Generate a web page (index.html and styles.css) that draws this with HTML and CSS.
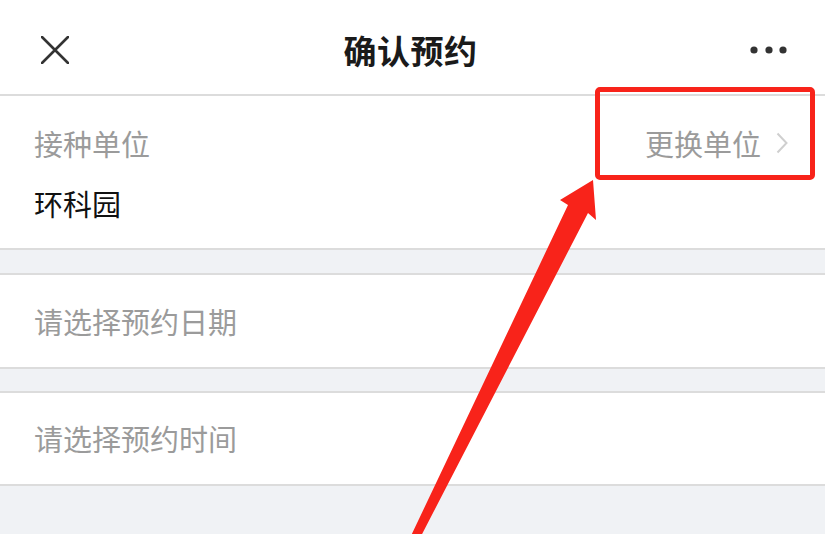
FILE: index.html
```html
<!DOCTYPE html>
<html lang="zh-CN">
<head>
    <meta charset="UTF-8">
    <meta name="viewport" content="width=device-width, initial-scale=1.0">
    <title>确认预约</title>
    <link rel="stylesheet" href="styles.css">
</head>
<body>
    <div class="page">
        <header class="nav">
            <button class="nav-btn nav-close" aria-label="关闭">
                <svg width="28" height="28" viewBox="0 0 28 28">
                    <path d="M1 1 L27 27 M27 1 L1 27" stroke="#333" stroke-width="2.6" stroke-linecap="round" fill="none"/>
                </svg>
            </button>
            <h1 class="nav-title">确认预约</h1>
            <button class="nav-btn nav-more" aria-label="更多">
                <svg width="38" height="10" viewBox="0 0 38 10">
                    <circle cx="4" cy="5" r="3.6" fill="#333"/>
                    <circle cx="19" cy="5" r="3.6" fill="#333"/>
                    <circle cx="33" cy="5" r="3.6" fill="#333"/>
                </svg>
            </button>
        </header>

        <!-- 接种单位 -->
        <section class="cell-group unit">
            <div class="unit-head">
                <span class="cell-label">接种单位</span>
                <a class="unit-change" href="#">
                    更换单位
                    <svg width="12" height="22" viewBox="0 0 12 22">
                        <path d="M1.5 1.5 L10.5 11 L1.5 20.5" stroke="#cfcfcf" stroke-width="2" fill="none"/>
                    </svg>
                </a>
            </div>
            <div class="unit-name">环科园</div>
        </section>

        <section class="cell-group picker">
            <span class="cell-label">请选择预约日期</span>
        </section>

        <section class="cell-group picker">
            <span class="cell-label">请选择预约时间</span>
        </section>

        <!-- 标注 -->
        <div class="mark-box"></div>
        <svg class="mark-arrow" width="825" height="534" viewBox="0 0 825 534">
            <polygon points="593,180 596,220 588,213 419,540 409,540 568,205 560,200" fill="#f8231a"/>
        </svg>
    </div>
</body>
</html>
```

FILE: styles.css
```css
body {
    margin: 0;
    padding: 0;
    background: #f0f2f5;
    font-family: "Noto Sans CJK SC", "Noto Sans", sans-serif;
    overflow: hidden;
}

.page {
    position: relative;
    height: 534px;
}

.nav {
    height: 96px;
    box-sizing: border-box;
    background: #fff;
    border-bottom: 2px solid #dcdcdc;
    display: grid;
    grid-template-columns: 1fr auto 1fr;
    align-items: center;
    padding: 6px 37px 0 41px;
}

.nav-btn {
    background: none;
    border: none;
    padding: 0;
    display: flex;
    cursor: pointer;
}

.nav-more {
    justify-self: end;
}

.nav-title {
    margin: 0 8px 0 0;
    font-size: 33px;
    font-weight: 700;
    color: #1a1a1a;
    line-height: 40px;
    letter-spacing: 0.5px;
}

.cell-group {
    background: #fff;
    border-bottom: 2px solid #dcdcdc;
    padding: 0 37px 0 34px;
}

.cell-label {
    font-size: 29px;
    color: #9b9b9b;
}

.unit {
    padding-top: 27px;
    padding-bottom: 25px;
}

.unit-head {
    display: flex;
    justify-content: space-between;
    align-items: center;
    height: 40px;
    line-height: 40px;
}

.unit-change {
    display: flex;
    align-items: center;
    gap: 15px;
    font-size: 29px;
    color: #9b9b9b;
    text-decoration: none;
}

.unit-name {
    margin-top: 20px;
    font-size: 29px;
    line-height: 40px;
    color: #111;
}

.picker {
    margin-top: 23px;
    border-top: 2px solid #dcdcdc;
    height: 92px;
    line-height: 92px;
}

.picker + .picker {
    margin-top: 22px;
    height: 91px;
    line-height: 91px;
}

.mark-box {
    position: absolute;
    left: 595px;
    top: 87px;
    width: 220px;
    height: 93px;
    box-sizing: border-box;
    border: 5px solid #f8231a;
    border-radius: 5px;
}

.mark-arrow {
    position: absolute;
    left: 0;
    top: 0;
    pointer-events: none;
}
```
